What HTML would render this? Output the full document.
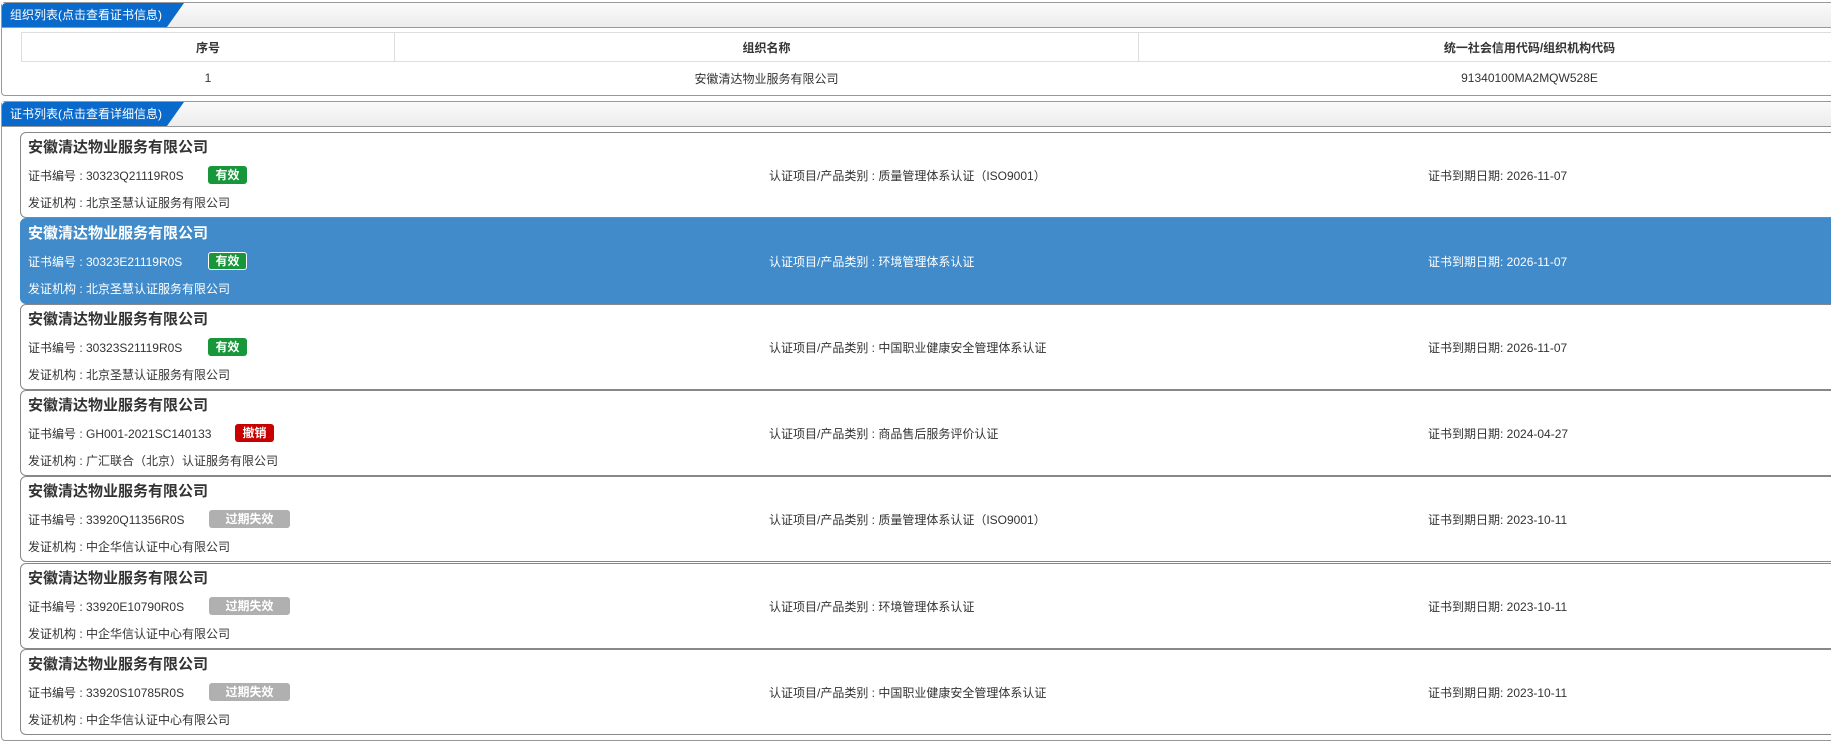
<!DOCTYPE html>
<html><head><meta charset="utf-8"><style>
*{margin:0;padding:0;box-sizing:border-box}
body{width:1831px;height:736px;overflow:hidden;background:#fff;font-family:"Liberation Sans","Noto Sans CJK SC",sans-serif;color:#333;position:relative}
.panel{position:absolute;left:1px;width:1900px;border:1px solid #999;border-radius:4px;background:#fff}
.hdr{position:absolute;left:0;right:0;top:0;height:25px;background:linear-gradient(#fafafa,#ececec);border-bottom:1px solid #999}
.tab{position:absolute;left:0;top:0;height:24px;width:182px;background:#0a6acb;clip-path:polygon(0 0,100% 0,165px 100%,0 100%);border-radius:4px 0 0 0;color:#fff;font-size:12px;line-height:24px;padding-left:8px}
table{position:absolute;left:19px;top:29px;border-collapse:collapse;width:1900px;font-size:12px}
th{border:1px solid #ddd;height:29px;font-weight:bold}
td{height:33px;text-align:center}
.card{position:absolute;left:20px;width:1900px;height:86px;border:1px solid #888;border-radius:6px;background:#fff;font-size:12px}
.card.sel{background:#418bca;color:#fff;border-color:#418bca}
.t{position:absolute;left:7px;top:3px;font-size:15px;font-weight:bold}
.l{position:absolute;white-space:nowrap}
.b{position:absolute;top:33px;height:18px;line-height:18px;color:#fff;font-weight:bold;font-size:12px;text-align:center;border-radius:3px}
.g{background:#17963a;width:39px;left:187px}
.sel .g{border:1px solid #fff;line-height:16px}
.r{background:#c80000;width:39px;left:214px}
.x{background:#b0b0b0;width:81px;left:188px}
.l2{top:34px}.l3{top:61px}
</style></head><body>
<div class="panel" style="top:2px;height:94px">
<div class="hdr"></div><div class="tab">组织列表(点击查看证书信息)</div>
<table><tr><th style="width:373px">序号</th><th style="width:744px">组织名称</th><th>统一社会信用代码/组织机构代码</th></tr>
<tr><td>1</td><td>安徽清达物业服务有限公司</td><td>91340100MA2MQW528E</td></tr></table>
</div>
<div class="panel" style="top:101px;height:640px">
<div class="hdr"></div><div class="tab">证书列表(点击查看详细信息)</div>
</div>

<div class="card" style="top:132px"><div class="t">安徽清达物业服务有限公司</div><div class="l l2" style="left:7px">证书编号 : 30323Q21119R0S</div><div class="b g">有效</div><div class="l l2" style="left:748px">认证项目/产品类别 : 质量管理体系认证（ISO9001）</div><div class="l l2" style="left:1407px">证书到期日期: 2026-11-07</div><div class="l l3" style="left:7px">发证机构 : 北京圣慧认证服务有限公司</div></div>

<div class="card sel" style="top:218px"><div class="t">安徽清达物业服务有限公司</div><div class="l l2" style="left:7px">证书编号 : 30323E21119R0S</div><div class="b g">有效</div><div class="l l2" style="left:748px">认证项目/产品类别 : 环境管理体系认证</div><div class="l l2" style="left:1407px">证书到期日期: 2026-11-07</div><div class="l l3" style="left:7px">发证机构 : 北京圣慧认证服务有限公司</div></div>

<div class="card" style="top:304px"><div class="t">安徽清达物业服务有限公司</div><div class="l l2" style="left:7px">证书编号 : 30323S21119R0S</div><div class="b g">有效</div><div class="l l2" style="left:748px">认证项目/产品类别 : 中国职业健康安全管理体系认证</div><div class="l l2" style="left:1407px">证书到期日期: 2026-11-07</div><div class="l l3" style="left:7px">发证机构 : 北京圣慧认证服务有限公司</div></div>

<div class="card" style="top:390px"><div class="t">安徽清达物业服务有限公司</div><div class="l l2" style="left:7px">证书编号 : GH001-2021SC140133</div><div class="b r">撤销</div><div class="l l2" style="left:748px">认证项目/产品类别 : 商品售后服务评价认证</div><div class="l l2" style="left:1407px">证书到期日期: 2024-04-27</div><div class="l l3" style="left:7px">发证机构 : 广汇联合（北京）认证服务有限公司</div></div>

<div class="card" style="top:476px"><div class="t">安徽清达物业服务有限公司</div><div class="l l2" style="left:7px">证书编号 : 33920Q11356R0S</div><div class="b x">过期失效</div><div class="l l2" style="left:748px">认证项目/产品类别 : 质量管理体系认证（ISO9001）</div><div class="l l2" style="left:1407px">证书到期日期: 2023-10-11</div><div class="l l3" style="left:7px">发证机构 : 中企华信认证中心有限公司</div></div>

<div class="card" style="top:563px"><div class="t">安徽清达物业服务有限公司</div><div class="l l2" style="left:7px">证书编号 : 33920E10790R0S</div><div class="b x">过期失效</div><div class="l l2" style="left:748px">认证项目/产品类别 : 环境管理体系认证</div><div class="l l2" style="left:1407px">证书到期日期: 2023-10-11</div><div class="l l3" style="left:7px">发证机构 : 中企华信认证中心有限公司</div></div>

<div class="card" style="top:649px"><div class="t">安徽清达物业服务有限公司</div><div class="l l2" style="left:7px">证书编号 : 33920S10785R0S</div><div class="b x">过期失效</div><div class="l l2" style="left:748px">认证项目/产品类别 : 中国职业健康安全管理体系认证</div><div class="l l2" style="left:1407px">证书到期日期: 2023-10-11</div><div class="l l3" style="left:7px">发证机构 : 中企华信认证中心有限公司</div></div>
</body></html>
